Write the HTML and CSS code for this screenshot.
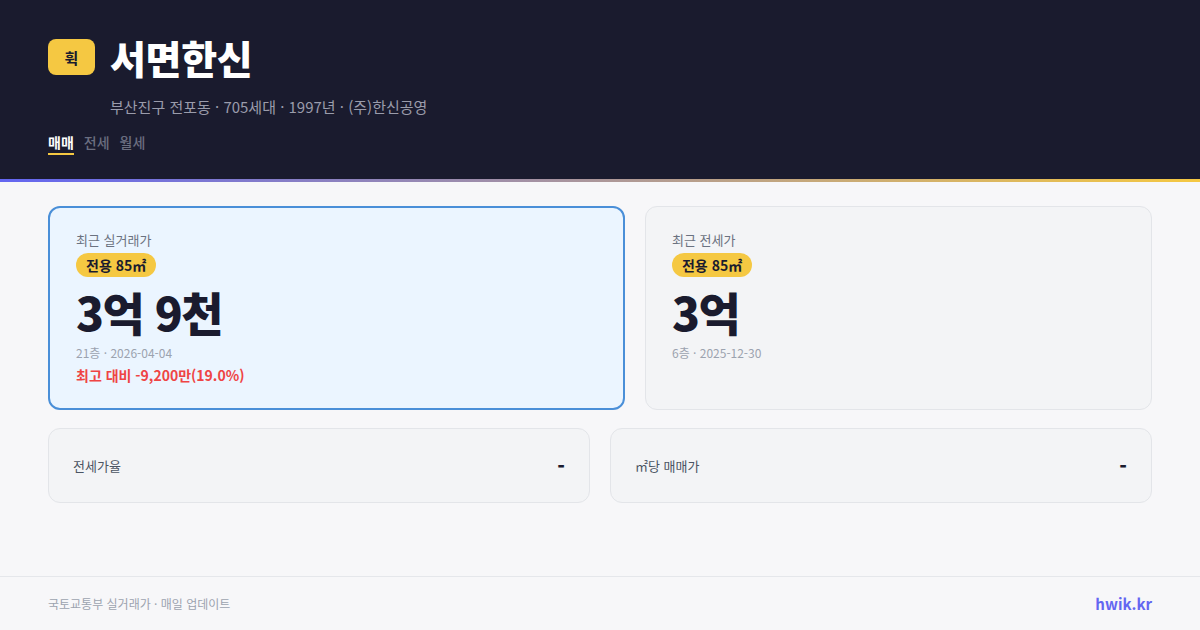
FILE: index.html
```html
<!DOCTYPE html>
<html lang="ko">
<head>
<meta charset="utf-8">
<link rel="stylesheet" href="styles.css">
</head>
<body>
<header class="hero">
  <div class="hero-top">
    <div class="logo">휙</div>
    <div class="hero-text">
      <h1 class="title">서면한신</h1>
      <p class="sub">부산진구 전포동 · 705세대 · 1997년 · (주)한신공영</p>
    </div>
  </div>
  <nav class="tabs">
    <span class="tab active">매매</span>
    <span class="tab">전세</span>
    <span class="tab">월세</span>
  </nav>
</header>
<div class="accent"></div>
<main class="content">
  <section class="cards">
    <div class="card primary">
      <div class="label">최근 실거래가</div>
      <span class="pill">전용 85㎡</span>
      <div class="price">3억 9천</div>
      <div class="meta">21층 · 2026-04-04</div>
      <div class="diff">최고 대비 -9,200만(19.0%)</div>
    </div>
    <div class="card">
      <div class="label">최근 전세가</div>
      <span class="pill">전용 85㎡</span>
      <div class="price">3억</div>
      <div class="meta">6층 · 2025-12-30</div>
    </div>
  </section>
  <section class="stats">
    <div class="stat"><span class="stat-label">전세가율</span><span class="stat-value">-</span></div>
    <div class="stat"><span class="stat-label">㎡당 매매가</span><span class="stat-value">-</span></div>
  </section>
</main>
<footer class="footer">
  <span class="source">국토교통부 실거래가 · 매일 업데이트</span>
  <span class="brand">hwik.kr</span>
</footer>
</body>
</html>
```

FILE: styles.css
```css
* { box-sizing: border-box; margin: 0; padding: 0; }
html, body { width: 1200px; height: 630px; overflow: hidden; }
body {
  font-family: "Noto Sans CJK KR", "Noto Sans", sans-serif;
  background: #f7f7f9;
  display: flex;
  flex-direction: column;
}
.hero {
  background: #1a1b2e;
  height: 179px;
  padding: 33px 48px 0;
}
.hero-top { display: flex; gap: 15px; align-items: flex-start; }
.logo {
  margin-top: 6px;
  width: 47px; height: 36px;
  background: #f5c842;
  border-radius: 8px;
  color: #1a1b2e;
  font-weight: 700;
  font-size: 15px;
  display: flex; align-items: center; justify-content: center;
}
.title {
  color: #fff;
  font-size: 39px;
  font-weight: 900;
  line-height: 48px;
  letter-spacing: -0.3px;
}
.sub {
  margin-top: 16px;
  color: #9a9cab;
  font-size: 15px;
  line-height: 20px;
}
.tabs { display: flex; gap: 10px; margin-top: 15px; }
.tab {
  color: #6b6e80;
  font-size: 14px;
  font-weight: 500;
  line-height: 20px;
  padding-bottom: 1px;
  border-bottom: 2px solid transparent;
}
.tab.active { color: #fff; font-weight: 700; border-bottom-color: #f5c842; }
.accent { height: 3px; background: linear-gradient(90deg, #6366f1, #f5c842); }
.content { padding: 24px 48px 0; flex: 1; }
.cards { display: grid; grid-template-columns: 1.138fr 1fr; gap: 20px; }
.card {
  height: 204px;
  background: #f3f4f6;
  border: 1px solid #e3e5e9;
  border-radius: 12px;
  padding: 24px 26px;
}
.card.primary {
  background: #ebf5ff;
  border: 2px solid #4a8fd8;
  padding: 23px 26px;
}
.label { color: #6b7280; font-size: 13px; line-height: 18px; }
.pill {
  display: inline-block;
  margin-top: 4px;
  background: #f5c842;
  color: #1a1b2e;
  font-size: 14px;
  font-weight: 700;
  line-height: 24px;
  padding: 0 10px;
  border-radius: 12px;
}
.price {
  margin-top: 6px;
  color: #1a1b2e;
  font-size: 46px;
  font-weight: 900;
  line-height: 56px;
  letter-spacing: -1.5px;
}
.meta { color: #9ca3af; font-size: 12px; line-height: 18px; margin-top: 5px; }
.diff { color: #ef4444; font-size: 14px; font-weight: 700; line-height: 20px; margin-top: 3px; }
.stats { display: grid; grid-template-columns: 1fr 1fr; gap: 20px; margin-top: 18px; }
.stat {
  height: 75px;
  background: #f3f4f6;
  border: 1px solid #e3e5e9;
  border-radius: 12px;
  padding: 0 24px;
  display: flex; align-items: center; justify-content: space-between;
}
.stat-label { color: #4b5563; font-size: 13px; }
.stat-value { color: #1a1b2e; font-size: 20px; font-weight: 900; }
.footer {
  height: 54px;
  border-top: 1px solid #e5e7eb;
  padding: 0 48px;
  display: flex; align-items: center; justify-content: space-between;
}
.source { color: #9ca3af; font-size: 12px; }
.brand { color: #6366f1; font-size: 15px; font-weight: 700; }
```
